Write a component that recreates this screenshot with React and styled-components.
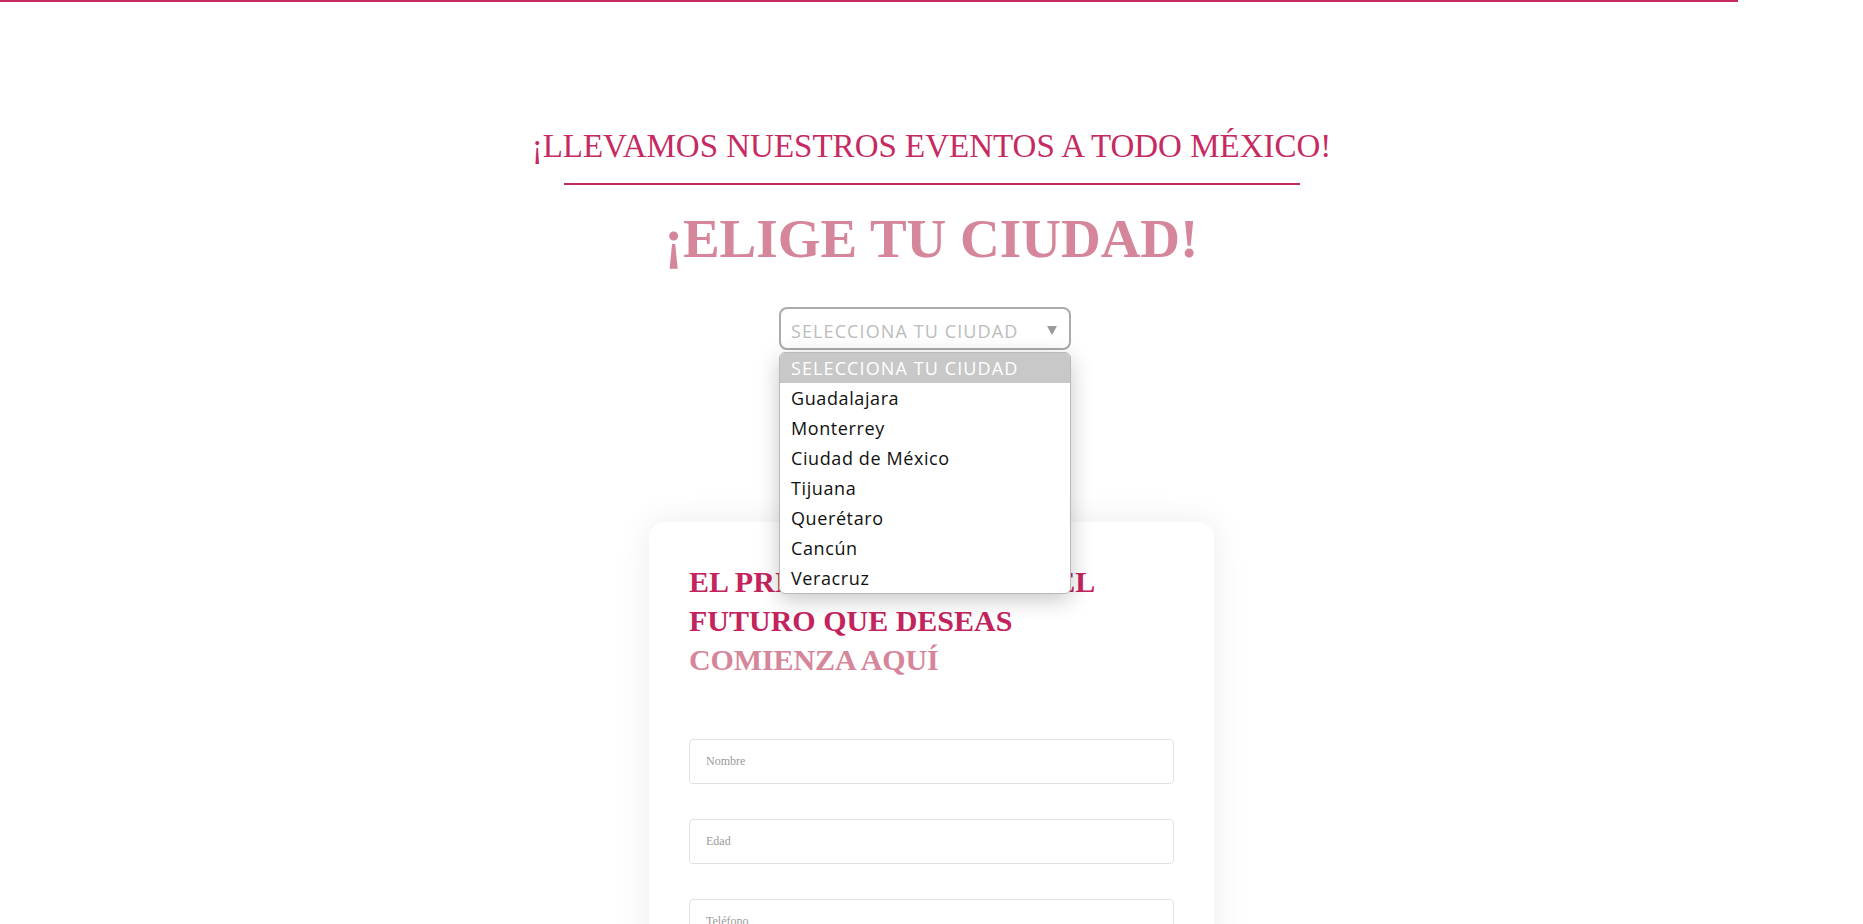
import React from 'react';
import styled, { createGlobalStyle } from 'styled-components';

const Global = createGlobalStyle`
	html {
		scrollbar-width: none;
	}
	body {
		margin: 0;
		background: #ffffff;
		font-family: 'Liberation Serif', 'Times New Roman', serif;
	}
`;

const TOPBAR = styled.div`
	width: 1738px;
	height: 2px;
	background: #c62a62;
`;

const MAIN = styled.main`
	display: flex;
	flex-direction: column;
	align-items: center;
	padding-bottom: 80px;
`;

const TITLE = styled.h1`
	margin: 124px 0 0;
	font-family: 'Liberation Serif', 'Times New Roman', serif;
	font-weight: normal;
	font-size: 33px;
	line-height: 40px;
	color: #c62a62;
	text-align: center;
`;

const RULE = styled.div`
	width: 736px;
	height: 2px;
	margin-top: 17px;
	background: #c62a62;
`;

const HEADLINE = styled.h2`
	margin: 22px 0 0;
	font-family: 'Liberation Serif', 'Times New Roman', serif;
	font-weight: bold;
	font-size: 55px;
	line-height: 64px;
	color: #d5869a;
	text-align: center;
`;

const SELECTWRAP = styled.div`
	position: relative;
	margin: 36px 13px 0 0;
	width: 292px;
	font-family: 'Open Sans', 'Noto Sans', sans-serif;
`;

const SELECTBOX = styled.div`
	box-sizing: border-box;
	height: 43px;
	border: 2px solid #ababab;
	border-radius: 8px;
	padding: 5px 12px 0 10px;
	display: flex;
	align-items: center;
	justify-content: space-between;
	font-size: 18px;
	letter-spacing: 1.1px;
	color: #bcbcbc;
	background: #fff;
`;

const ARROW = styled.span`
	width: 0;
	height: 0;
	margin-top: -2px;
	border-left: 5px solid transparent;
	border-right: 5px solid transparent;
	border-top: 9px solid #9a9a9a;
`;

const OPTIONLIST = styled.ul`
	position: absolute;
	top: calc(100% + 2px);
	left: 0;
	right: 0;
	margin: 0;
	padding: 0;
	list-style: none;
	background: #fff;
	border: 1px solid #b8b8b8;
	border-radius: 6px;
	overflow: hidden;
	box-shadow: 0 6px 22px rgba(0, 0, 0, 0.22);
	z-index: 10;
`;

const OPTION = styled.li`
	height: 30px;
	line-height: 30px;
	padding: 0 11px;
	font-size: 18px;
	letter-spacing: ${(p) => (p.active ? '1.1px' : '0.6px')};
	white-space: nowrap;
	color: ${(p) => (p.active ? '#ffffff' : '#111111')};
	background: ${(p) => (p.active ? '#c8c8c8' : 'transparent')};
`;

const CARD = styled.section`
	box-sizing: border-box;
	width: 565px;
	margin-top: 172px;
	padding: 40px 40px 60px;
	background: #fff;
	border-radius: 16px;
	box-shadow: 0 0 34px rgba(0, 0, 0, 0.08);
`;

const CARDTITLE = styled.h3`
	margin: 0;
	font-family: 'Liberation Serif', 'Times New Roman', serif;
	font-weight: bold;
	font-size: 30px;
	line-height: 39px;
	color: #c4245d;
`;

const SOFT = styled.span`
	display: block;
	color: #d5869a;
	letter-spacing: -0.1px;
`;

const FORM = styled.form`
	display: flex;
	flex-direction: column;
	gap: 35px;
	margin-top: 60px;
`;

const FIELD = styled.input`
	box-sizing: border-box;
	width: 100%;
	height: 45px;
	padding: 0 16px;
	border: 1px solid #e2e2e2;
	border-radius: 4px;
	font-family: 'Liberation Serif', 'Times New Roman', serif;
	font-size: 12px;
	color: #333;
	outline: none;
	&::placeholder {
		color: #9a9a9a;
	}
`;

const BUTTON = styled.button`
	height: 48px;
	border: none;
	border-radius: 4px;
	background: #c4245d;
	color: #fff;
	font-family: 'Liberation Serif', 'Times New Roman', serif;
	font-size: 18px;
	font-weight: bold;
`;

const cities = [
	'Guadalajara',
	'Monterrey',
	'Ciudad de México',
	'Tijuana',
	'Querétaro',
	'Cancún',
	'Veracruz',
];

const App = () => {
	return (
		<>
			<Global />
			<TOPBAR />
			<MAIN>
				<TITLE>¡LLEVAMOS NUESTROS EVENTOS A TODO MÉXICO!</TITLE>
				<RULE />
				<HEADLINE>¡ELIGE TU CIUDAD!</HEADLINE>
				<SELECTWRAP>
					<SELECTBOX>
						SELECCIONA TU CIUDAD
						<ARROW />
					</SELECTBOX>
					<OPTIONLIST>
						<OPTION active>SELECCIONA TU CIUDAD</OPTION>
						{cities.map((c) => (
							<OPTION key={c}>{c}</OPTION>
						))}
					</OPTIONLIST>
				</SELECTWRAP>
				<CARD>
					<CARDTITLE>
						EL PRIMER PASO HACIA EL
						<br />
						FUTURO QUE DESEAS
						<SOFT>COMIENZA AQUÍ</SOFT>
					</CARDTITLE>
					<FORM onSubmit={(e) => e.preventDefault()}>
						<FIELD placeholder="Nombre" />
						<FIELD placeholder="Edad" />
						<FIELD placeholder="Teléfono" />
						<FIELD placeholder="Correo electrónico" />
						<BUTTON type="submit">ENVIAR</BUTTON>
					</FORM>
				</CARD>
			</MAIN>
		</>
	);
};

export default App;
